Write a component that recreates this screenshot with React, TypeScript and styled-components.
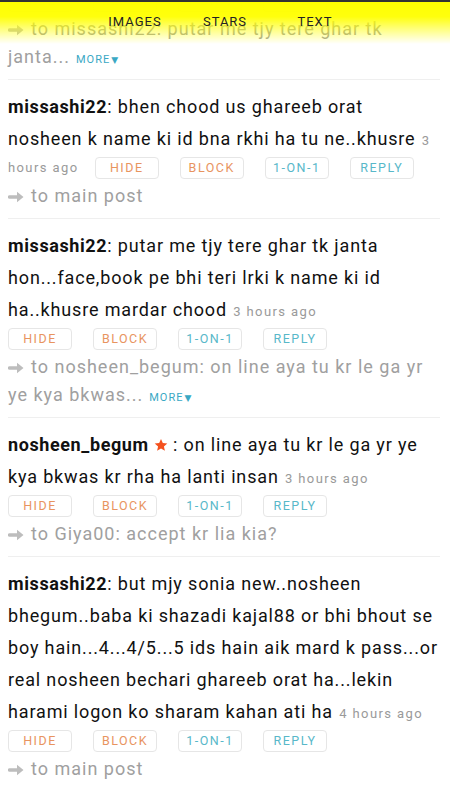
import React, { useLayoutEffect, useRef } from "react"
import styled, { createGlobalStyle } from "styled-components"

type Post = {
    user: string
    star?: boolean
    text: string
    time: string
    replyTo: string
    more?: boolean
}

const posts: Post[] = [
    {
        user: "nosheen_begum",
        star: true,
        text: "tu kon ha aur kya chahta ha yr",
        time: "3 hours ago",
        replyTo: "to missashi22: putar me tjy tere ghar tk janta...",
        more: true,
    },
    {
        user: "missashi22",
        text: "bhen chood us ghareeb orat nosheen k name ki id bna rkhi ha tu ne..khusre",
        time: "3 hours ago",
        replyTo: "to main post",
    },
    {
        user: "missashi22",
        text: "putar me tjy tere ghar tk janta hon...face,book pe bhi teri lrki k name ki id ha..khusre mardar chood",
        time: "3 hours ago",
        replyTo: "to nosheen_begum: on line aya tu kr le ga yr ye kya bkwas...",
        more: true,
    },
    {
        user: "nosheen_begum",
        star: true,
        text: "on line aya tu kr le ga yr ye kya bkwas kr rha ha lanti insan",
        time: "3 hours ago",
        replyTo: "to Giya00: accept kr lia kia?",
    },
    {
        user: "missashi22",
        text: "but mjy sonia new..nosheen bhegum..baba ki shazadi kajal88 or bhi bhout se boy hain...4...4/5...5 ids hain aik mard k pass...or real nosheen bechari ghareeb orat ha...lekin harami logon ko sharam kahan ati ha",
        time: "4 hours ago",
        replyTo: "to main post",
    },
    {
        user: "Giya00",
        text: "accept kr lia kia?",
        time: "4 hours ago",
        replyTo: "to main post",
    },
]

const GlobalStyle = createGlobalStyle`
    html, body {
        margin: 0;
        padding: 0;
        height: 100%;
        background: #fff;
    }
    body {
        font-family: Roboto, "Noto Sans", "DejaVu Sans", sans-serif;
        overflow: hidden;
    }
    #root {
        height: 100%;
    }
`

const Screen = styled.div`
    position: relative;
    height: 100vh;
    overflow: hidden;
`

const Header = styled.div`
    position: absolute;
    top: 0;
    left: 0;
    right: 0;
    z-index: 2;
    height: 44px;
    border-top: 2px solid #333;
    padding-top: 11px;
    box-sizing: border-box;
    display: flex;
    justify-content: center;
    align-items: flex-start;
    background: linear-gradient(
        to bottom,
        rgba(255, 255, 0, 1) 0%,
        rgba(255, 255, 0, 0.95) 35%,
        rgba(255, 255, 0, 0.5) 65%,
        rgba(255, 255, 0, 0) 100%
    );
`

const Tab = styled.div`
    width: 90px;
    text-align: center;
    font-size: 13px;
    line-height: 18px;
    letter-spacing: 1px;
    color: #222;
`

const Scroller = styled.div`
    position: relative;
    height: 100%;
    overflow-y: auto;
    scrollbar-width: none;

    &::-webkit-scrollbar {
        display: none;
    }
`

const Feed = styled.div`
    padding: 0 10px 40px 8px;
`

const Item = styled.div`
    padding: 11px 0 8px;
    border-bottom: 1px solid #efefef;
`

const Body = styled.div`
    font-size: 13px;
    line-height: 16px;
    color: #111;
`

const Message = styled.span`
    font-size: 18px;
    line-height: 32px;
    letter-spacing: 0.85px;
`

const Name = styled.b`
    font-weight: 700;
    letter-spacing: 0.6px;
`

const Star = styled.svg`
    width: 14px;
    height: 14px;
    margin-left: 5px;
    vertical-align: -1px;
`

const Time = styled.span`
    margin-left: 3px;
    padding-right: 13px;
    font-size: 13px;
    letter-spacing: 1.4px;
    color: #9a9a9a;
`

const Actions = styled.span`
    display: inline-block;
    white-space: nowrap;
    vertical-align: middle;
    margin: 2px 0 3px;
`

const ActionButton = styled.span<{ $tone: "warm" | "cool" }>`
    display: inline-flex;
    align-items: center;
    justify-content: center;
    box-sizing: border-box;
    width: 64px;
    height: 22px;
    margin-right: 21px;
    border: 1px solid #e6e6e6;
    border-radius: 4px;
    font-size: 12.5px;
    letter-spacing: 1.5px;
    color: ${p => (p.$tone === "warm" ? "#e8945f" : "#58b8c9")};

    &:last-child {
        margin-right: 0;
    }
`

const ReplyTo = styled.div`
    font-size: 18px;
    line-height: 28px;
    letter-spacing: 1px;
    color: #a0a0a0;
`

const Arrow = styled.svg`
    width: 16px;
    height: 12px;
    margin-right: 7px;
    vertical-align: -1px;
`

const More = styled.span`
    margin-left: 6px;
    font-size: 11px;
    line-height: 1;
    letter-spacing: 1px;
    color: #3aa8c4;
`

const Caret = styled.span`
    font-size: 9px;
    line-height: 1;
    margin-left: 1px;
`

const StarIcon = () => (
    <Star viewBox="0 0 24 24">
        <path
            fill="#f4511e"
            d="M12 1.5l3.1 7.1 7.7.7-5.8 5.1 1.7 7.6L12 18l-6.7 4 1.7-7.6-5.8-5.1 7.7-.7z"
        />
    </Star>
)

const ArrowIcon = () => (
    <Arrow viewBox="0 0 16 12">
        <path fill="#bdbdbd" d="M1.5 4.3h7.5V0.8L15.5 6 9 11.2V7.7H1.5A1.7 1.7 0 0 1 1.5 4.3z" />
    </Arrow>
)

const PostItem: React.FC<{ post: Post; itemRef?: React.Ref<HTMLDivElement> }> = ({ post, itemRef }) => (
    <Item ref={itemRef}>
        <Body>
            <Message>
                <Name>{post.user}</Name>
                {post.star && <StarIcon />}
                {post.star ? " : " : ": "}
                {post.text}
            </Message>{" "}
            <Time>{post.time}</Time>{" "}
            <Actions>
                <ActionButton $tone="warm">HIDE</ActionButton>
                <ActionButton $tone="warm">BLOCK</ActionButton>
                <ActionButton $tone="cool">1-ON-1</ActionButton>
                <ActionButton $tone="cool">REPLY</ActionButton>
            </Actions>
        </Body>
        <ReplyTo>
            <ArrowIcon />
            {post.replyTo}
            {post.more && (
                <More>
                    MORE<Caret>▼</Caret>
                </More>
            )}
        </ReplyTo>
    </Item>
)

export default function App() {
    const scroller = useRef<HTMLDivElement>(null)
    const first = useRef<HTMLDivElement>(null)

    // the feed is shown scrolled so the first post's end sits just under the header
    useLayoutEffect(() => {
        if (scroller.current && first.current) {
            scroller.current.scrollTop = first.current.offsetTop + first.current.offsetHeight - 80
        }
    }, [])

    return (
        <Screen>
            <GlobalStyle />
            <Header>
                <Tab>IMAGES</Tab>
                <Tab>STARS</Tab>
                <Tab>TEXT</Tab>
            </Header>
            <Scroller ref={scroller}>
                <Feed>
                    {posts.map((p, i) => (
                        <PostItem key={i} post={p} itemRef={i === 0 ? first : undefined} />
                    ))}
                </Feed>
            </Scroller>
        </Screen>
    )
}
